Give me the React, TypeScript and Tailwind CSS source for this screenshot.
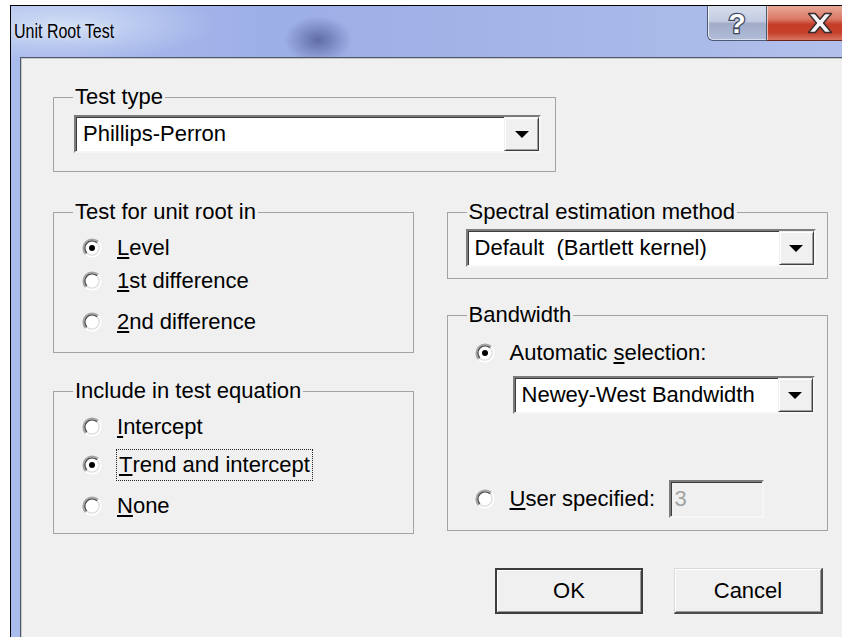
import React from "react";

const FONT = "font-['Liberation_Sans',Arial,sans-serif]";

function Radio({ checked }: { checked?: boolean }) {
  return (
    <svg width="20" height="20" viewBox="0 0 20 20" className="shrink-0">
      <circle cx="10" cy="10" r="8.6" fill="#ffffff" />
      <path d="M3.64 16.36 A9 9 0 0 1 16.36 3.64" fill="none" stroke="#a4a4a4" strokeWidth="1.6" />
      <path d="M4.84 15.16 A7.3 7.3 0 0 1 15.16 4.84" fill="none" stroke="#4a4a4a" strokeWidth="1.4" />
      <path d="M16.36 3.64 A9 9 0 0 1 3.64 16.36" fill="none" stroke="#ffffff" strokeWidth="1.6" />
      <path d="M15.16 4.84 A7.3 7.3 0 0 1 4.84 15.16" fill="none" stroke="#dedede" strokeWidth="1.4" />
      {checked && <circle cx="10" cy="10" r="3" fill="#000000" />}
    </svg>
  );
}

function Arrow() {
  return (
    <svg width="14" height="7" viewBox="0 0 14 7">
      <path d="M0 0H14L7 7Z" fill="#000000" />
    </svg>
  );
}

function Combo({ text, className }: { text: string; className: string }) {
  return (
    <div
      className={`flex h-[38px] border-2 border-t-[#7c7c7c] border-l-[#7c7c7c] border-r-[#f6f6f6] border-b-[#f6f6f6] bg-white shadow-[inset_1px_1px_0_#3c3c3c] ${className}`}
    >
      <div className="flex flex-1 items-center overflow-hidden whitespace-pre pl-[7px]">{text}</div>
      <div className="flex h-full w-[35px] items-center justify-center border border-t-[#f0f0f0] border-l-[#f0f0f0] border-r-[#404040] border-b-[#404040] bg-[#f0f0f0] shadow-[inset_1px_1px_0_#ffffff,inset_-1px_-1px_0_#a0a0a0]">
        <Arrow />
      </div>
    </div>
  );
}

function Group({
  title,
  className,
  children,
}: {
  title: string;
  className: string;
  children?: React.ReactNode;
}) {
  return (
    <fieldset className={`border border-[#a3a3a3] ${className}`}>
      <legend className="ml-[19px] px-[2px] leading-[26px]">{title}</legend>
      {children}
    </fieldset>
  );
}

function Option({
  checked,
  className,
  children,
}: {
  checked?: boolean;
  className: string;
  children: React.ReactNode;
}) {
  return (
    <div className={`flex h-[30px] items-center ${className}`}>
      <Radio checked={checked} />
      <span className="ml-[15px] whitespace-nowrap">{children}</span>
    </div>
  );
}

function Key({ children }: { children: React.ReactNode }) {
  return <u className="underline decoration-2 underline-offset-[2px]">{children}</u>;
}

function HelpButton() {
  return (
    <div className="flex h-[35px] w-[60px] items-center justify-center rounded-bl-[6px] border border-t-0 border-[#4d5a74] bg-[linear-gradient(180deg,#d6ddec_0%,#c2cbe0_45%,#a0acc8_52%,#b2bed8_100%)] shadow-[inset_1px_0_0_rgba(255,255,255,0.7),inset_0_-1px_0_rgba(255,255,255,0.5)]">
      <svg width="24" height="33" viewBox="0 0 24 33" className="overflow-visible">
        <text
          x="12"
          y="26"
          textAnchor="middle"
          fontFamily="Liberation Sans, Arial, sans-serif"
          fontWeight="700"
          fontSize="28"
          fill="#ffffff"
          stroke="#3e4760"
          strokeWidth="2.6"
          paintOrder="stroke"
        >
          ?
        </text>
      </svg>
    </div>
  );
}

function CloseButton() {
  return (
    <div className="flex h-[35px] w-[106px] items-center justify-center border-b border-r border-[#6a2418] bg-[linear-gradient(180deg,#e8a898_0%,#da7a66_38%,#c63d28_54%,#c5402a_78%,#d87460_100%)] shadow-[inset_1px_0_0_rgba(255,230,220,0.7)]">
      <svg width="26" height="22" viewBox="0 0 26 22">
        <path
          d="M1.5 1.5H8.2L13 7.3L17.8 1.5H24.5L16.6 11L24.5 20.5H17.8L13 14.7L8.2 20.5H1.5L9.4 11Z"
          fill="#f4f4f6"
          stroke="#3a2c2c"
          strokeWidth="1.5"
          strokeLinejoin="round"
        />
      </svg>
    </div>
  );
}

export default function App() {
  return (
    <div className={`h-[637px] w-[842px] overflow-hidden bg-white text-[22px] leading-[26px] text-black ${FONT}`}>
      <div className="ml-[10px] mt-[5px] flex h-[640px] w-[873px] flex-col border-l border-t border-black bg-[radial-gradient(ellipse_34px_24px_at_307px_34px,rgba(84,96,156,0.85),rgba(84,96,156,0)),radial-gradient(ellipse_150px_38px_at_55px_18px,rgba(214,226,246,0.85),rgba(214,226,246,0)),linear-gradient(90deg,#aabced_0px,#9dafe7_260px,#a1b2e7_440px,#abbbe9_700px,#b4c2eb_870px)]">
        {/* title bar */}
        <div className="flex h-[51px] shrink-0">
          <div className="flex-1 pl-[3px] pt-[18px]">
            <div className="w-fit origin-center text-[16px] leading-[16px] [transform:scaleY(1.25)] [text-shadow:0_0_8px_rgba(255,255,255,0.9)]">
              Unit Root Test
            </div>
          </div>
          <HelpButton />
          <CloseButton />
          <div className="w-[10px]" />
        </div>

        {/* client area */}
        <div className="ml-[9px] flex-1 border-l border-t border-[#4f5868] bg-[#f0f0f0] shadow-[inset_1px_1px_0_#c8c8c8]">
          <div className="ml-[32px] w-[775px]">
            <Group title="Test type" className="mt-[26px] h-[88px] w-[503px]">
              <Combo text="Phillips-Perron" className="ml-[20px] mt-[5px] w-[467px]" />
            </Group>

            <div className="mt-[27px] flex">
              <div className="flex w-[361px] flex-col">
                <Group title="Test for unit root in" className="h-[154px]">
                  <Option checked className="ml-[28px] mt-[8px]">
                    <Key>L</Key>evel
                  </Option>
                  <Option className="ml-[28px] mt-[3px]">
                    <Key>1</Key>st difference
                  </Option>
                  <Option className="ml-[28px] mt-[11px]">
                    <Key>2</Key>nd difference
                  </Option>
                </Group>

                <Group title="Include in test equation" className="mt-[25px] h-[156px]">
                  <Option className="ml-[28px] mt-[8px]">
                    <Key>I</Key>ntercept
                  </Option>
                  <div className="ml-[28px] mt-[8px] flex h-[30px] items-center">
                    <Radio checked />
                    <span className="ml-[14px] flex h-[32px] items-center whitespace-nowrap border border-dotted border-[#222222] px-[2px]">
                      <Key>T</Key>rend and intercept
                    </span>
                  </div>
                  <Option className="ml-[28px] mt-[11px]">
                    <Key>N</Key>one
                  </Option>
                </Group>
              </div>

              <div className="ml-[33px] flex w-[382px] flex-col">
                <Group title="Spectral estimation method" className="h-[80px]">
                  <Combo text="Default  (Bartlett kernel)" className="ml-[18px] mt-[4px] w-[350px]" />
                </Group>

                <Group title="Bandwidth" className="mt-[23px] h-[229px]">
                  <Option checked className="ml-[27px] mt-[10px]">
                    Automatic <Key>s</Key>election:
                  </Option>
                  <Combo text="Newey-West Bandwidth" className="ml-[65px] mt-[8px] w-[302px]" />
                  <div className="ml-[27px] mt-[66px] flex h-[38px] items-center">
                    <Radio />
                    <span className="ml-[15px] w-[159px] whitespace-nowrap">
                      <Key>U</Key>ser specified:
                    </span>
                    <div className="flex h-[38px] w-[95px] items-center border-2 border-t-[#7c7c7c] border-l-[#7c7c7c] border-r-[#f6f6f6] border-b-[#f6f6f6] bg-[#f0f0f0] pl-[4px] text-[#a2a2a2] shadow-[inset_1px_1px_0_#3c3c3c]">
                      3
                    </div>
                  </div>
                </Group>
              </div>
            </div>

            <div className="mt-[34px] flex justify-end gap-[31px] pr-[5px]">
              <div className="flex h-[46px] w-[148px] items-center justify-center border-2 border-[#3d3d3d] bg-[#f0f0f0] shadow-[inset_1px_1px_0_#ffffff,inset_-1px_-1px_0_#9a9a9a]">
                OK
              </div>
              <div className="flex h-[46px] w-[149px] items-center justify-center border-b-2 border-l border-r-2 border-t border-b-[#4e4e4e] border-l-[#dadada] border-r-[#4e4e4e] border-t-[#dadada] bg-[#f0f0f0] shadow-[inset_1px_1px_0_#ffffff,inset_-1px_-1px_0_#9a9a9a]">
                Cancel
              </div>
            </div>
          </div>
        </div>
      </div>
    </div>
  );
}
